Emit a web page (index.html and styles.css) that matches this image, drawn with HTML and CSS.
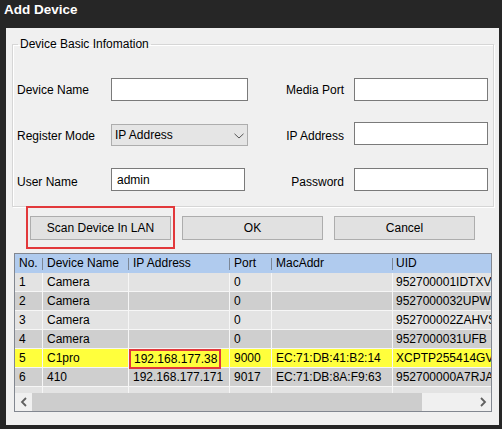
FILE: index.html
```html
<!DOCTYPE html>
<html>
<head>
<meta charset="utf-8">
<title>Add Device</title>
<link rel="stylesheet" href="styles.css">
</head>
<body>
<div class="window">
  <div class="titlebar">Add Device</div>
  <div class="client">
    <fieldset class="group">
      <legend>Device Basic Infomation</legend>
      <div class="form">
        <label class="lbl">Device Name</label>
        <input class="field" type="text" value="">
        <label class="lbl lbl-r">Media Port</label>
        <input class="field" type="text" value="">

        <label class="lbl lbl-mid">Register Mode</label>
        <div class="combo"><span>IP Address</span><svg class="chev" width="10" height="6" viewBox="0 0 10 6"><polyline points="0.5,0.8 5,5 9.5,0.8" fill="none" stroke="#555" stroke-width="1"/></svg></div>
        <label class="lbl lbl-r lbl-mid">IP Address</label>
        <input class="field field-up" type="text" value="">

        <label class="lbl lbl-low">User Name</label>
        <input class="field field-short" type="text" value="admin">
        <label class="lbl lbl-r lbl-low">Password</label>
        <input class="field" type="text" value="">
      </div>
    </fieldset>

    <div class="actions">
      <span class="mark"><button class="btn">Scan Device In LAN</button></span>
      <button class="btn">OK</button>
      <button class="btn">Cancel</button>
    </div>

    <div class="list">
      <div class="list-view">
        <div class="row hdr">
          <div class="c">No.</div><div class="c">Device Name</div><div class="c">IP Address</div><div class="c">Port</div><div class="c">MacAddr</div><div class="c c-uid">UID</div>
        </div>
        <div class="row odd">
          <div class="c">1</div><div class="c">Camera</div><div class="c"></div><div class="c">0</div><div class="c"></div><div class="c c-uid">952700001IDTXV</div>
        </div>
        <div class="row even">
          <div class="c">2</div><div class="c">Camera</div><div class="c"></div><div class="c">0</div><div class="c"></div><div class="c c-uid">9527000032UPW</div>
        </div>
        <div class="row odd">
          <div class="c">3</div><div class="c">Camera</div><div class="c"></div><div class="c">0</div><div class="c"></div><div class="c c-uid">952700002ZAHVS</div>
        </div>
        <div class="row even">
          <div class="c">4</div><div class="c">Camera</div><div class="c"></div><div class="c">0</div><div class="c"></div><div class="c c-uid">9527000031UFB</div>
        </div>
        <div class="row sel">
          <div class="c">5</div><div class="c">C1pro</div><div class="c c-mark"><span class="ipmark">192.168.177.38</span></div><div class="c">9000</div><div class="c">EC:71:DB:41:B2:14</div><div class="c c-uid">XCPTP255414GV</div>
        </div>
        <div class="row even">
          <div class="c">6</div><div class="c">410</div><div class="c">192.168.177.171</div><div class="c">9017</div><div class="c">EC:71:DB:8A:F9:63</div><div class="c c-uid">952700000A7RJA</div>
        </div>
        <div class="row odd">
          <div class="c"></div><div class="c"></div><div class="c"></div><div class="c"></div><div class="c"></div><div class="c c-uid"></div>
        </div>
      </div>
      <div class="hscroll">
        <div class="sb-btn"><svg width="8" height="10" viewBox="0 0 8 10"><polyline points="6,1 2,5 6,9" fill="none" stroke="#606060" stroke-width="1.8"/></svg></div>
        <div class="thumb"></div>
        <div class="track"></div>
        <div class="sb-btn"><svg width="8" height="10" viewBox="0 0 8 10"><polyline points="2,1 6,5 2,9" fill="none" stroke="#606060" stroke-width="1.8"/></svg></div>
      </div>
    </div>
  </div>
</div>
</body>
</html>
```

FILE: styles.css
```css
html, body {
  margin: 0;
  padding: 0;
}

body {
  background: #262626;
  font-family: "Liberation Sans", Arial, sans-serif;
  font-size: 12px;
  color: #000;
}

.window {
  width: 502px;
  height: 429px;
  display: flex;
  flex-direction: column;
}

.titlebar {
  flex: none;
  height: 28px;
  box-sizing: border-box;
  padding: 1px 0 0 4px;
  line-height: 18px;
  font-size: 13.5px;
  font-weight: bold;
  color: #fff;
}

.client {
  margin: 0 3px 0 6px;
  height: 397px;
  box-sizing: border-box;
  padding-top: 9px;
  background: #f0f0f0;
}

/* group box */
.group {
  margin: 0 5px 0 6px;
  padding: 27px 0 15px 4px;
  border: 1px solid #d6d6d6;
  box-shadow: inset 1px 1px 0 #fff, 1px 1px 0 #fff;
  min-width: 0;
}

.group legend {
  padding: 0 2px;
  margin-left: 1px;
  font-size: 12px;
  line-height: 14px;
}

.form {
  display: grid;
  grid-template-columns: 94px 137px 106px 134px;
  grid-auto-rows: 23px;
  row-gap: 22px;
}

.lbl {
  display: flex;
  align-items: center;
  white-space: nowrap;
}

.lbl-r {
  justify-content: flex-end;
  padding-right: 10px;
}

.lbl-mid {
  padding-top: 2px;
}

.lbl-low {
  padding-top: 5px;
}

.field {
  display: block;
  width: 100%;
  height: 23px;
  box-sizing: border-box;
  margin: 0;
  padding: 0 0 0 5px;
  border: 1px solid #7a7a7a;
  background: #fff;
  font-family: "Liberation Sans", Arial, sans-serif;
  font-size: 12px;
  color: #000;
  outline: none;
}

.field-short {
  width: 134px;
}

.field-up {
  margin-top: -1px;
}

.combo {
  display: flex;
  align-items: center;
  justify-content: space-between;
  height: 22px;
  margin-top: 1px;
  box-sizing: border-box;
  border: 1px solid #adadad;
  background: #e5e5e5;
  padding: 0 3px 0 3px;
  white-space: nowrap;
}

.chev {
  display: block;
  margin-top: 1px;
}

/* buttons */
.actions {
  display: flex;
  gap: 11px;
  margin: 9px 0 0 24px;
}

.btn {
  width: 141px;
  height: 24px;
  box-sizing: border-box;
  margin: 0;
  padding: 0;
  border: 1px solid #adadad;
  background: #e1e1e1;
  font-family: "Liberation Sans", Arial, sans-serif;
  font-size: 12px;
  color: #000;
}

.mark {
  position: relative;
  display: block;
}

.mark::after {
  content: "";
  position: absolute;
  top: -10px;
  bottom: -9px;
  left: -4px;
  right: -4px;
  border: 2px solid #e2383b;
  pointer-events: none;
}

.mark .btn {
  display: block;
}

/* list view */
.list {
  margin: 13px 0 0 8px;
  width: 478px;
  height: 159px;
  box-sizing: border-box;
  border: 1px solid #828790;
  background: #fff;
  overflow: hidden;
  display: flex;
  flex-direction: column;
}

.list-view {
  flex: none;
  height: 139px;
  overflow: hidden;
}

.row {
  display: grid;
  grid-template-columns: 28px 86px 101px 42px 121px 160px;
  height: 19px;
  box-sizing: border-box;
  border-bottom: 1px solid #f6f6f6;
}

.c {
  box-sizing: border-box;
  padding-left: 4px;
  line-height: 19px;
  white-space: nowrap;
  overflow: hidden;
  border-right: 1px solid #f6f6f6;
}

.c-uid {
  padding-left: 3px;
}

.hdr {
  background: #b0cbee;
  border-bottom: none;
}

.hdr .c {
  line-height: 19px;
  border-right: none;
  background: linear-gradient(#7b8797, #7b8797) no-repeat right center / 1px 12px;
}

.odd {
  background: #e3e3e3;
}

.even {
  background: #cfcfcf;
}

.sel {
  background: #ffff3c;
}

.c-mark {
  overflow: visible;
  position: relative;
  z-index: 1;
}

.ipmark {
  display: inline-block;
  vertical-align: top;
  margin-left: -4px;
  height: 20px;
  box-sizing: border-box;
  padding: 0 2px 0 3px;
  border: 2px solid #e2383b;
  line-height: 17px;
}

/* horizontal scrollbar */
.hscroll {
  flex: none;
  display: flex;
  height: 18px;
  background: #f0f0f0;
}

.sb-btn {
  width: 17px;
  display: flex;
  align-items: center;
  justify-content: center;
}

.thumb {
  width: 390px;
  background: #cdcdcd;
}

.track {
  flex: 1;
}
```
